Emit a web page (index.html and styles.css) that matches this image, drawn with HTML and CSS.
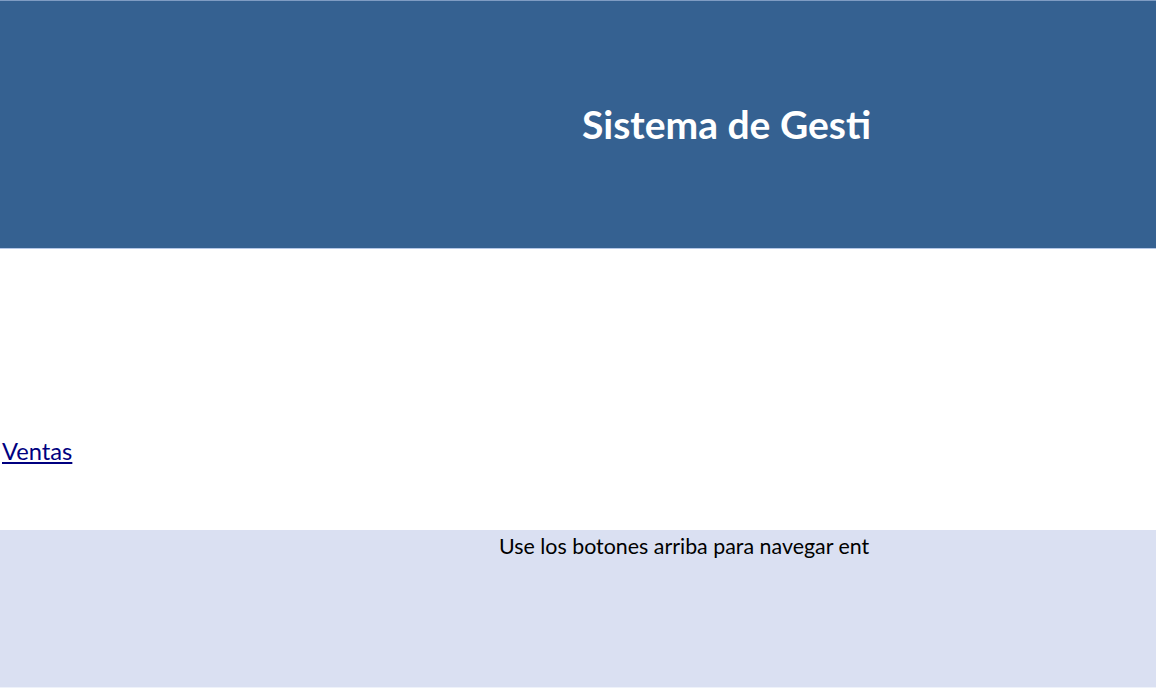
FILE: index.html
```html
<!DOCTYPE html>
<html lang="es">
<head>
    <meta charset="UTF-8">
    <meta name="viewport" content="width=device-width, initial-scale=1.0">
    <title>Sistema de Gestión de Ventas</title>
    <link rel="stylesheet" href="styles.css">
</head>
<body>
    <header class="banner">
        <div class="title-cell">
            <h1>Sistema de Gesti</h1>
        </div>
    </header>

    <div class="nav-row">
        <a href="#ventas">Ventas</a>
    </div>

    <div class="note-row">
        <div class="note-cell">Use los botones arriba para navegar ent</div>
    </div>
</body>
</html>
```

FILE: styles.css
```css
body {
    font-family: 'Lato', 'Noto Sans', sans-serif;
    margin: 0;
    padding: 0;
    background: #fff;
    color: #000;
}

/* Header band */
.banner {
    height: 247px;
    background: #356191;
    border-top: 1px solid #7f9cc3;
    border-bottom: 1px solid #b4c7e7;
    display: flex;
    align-items: center;
}

.title-cell {
    margin-left: 582px;
    white-space: nowrap;
}

.title-cell h1 {
    margin: 0;
    font-size: 39px;
    line-height: 1.2;
    font-weight: bold;
    color: #fff;
}

/* Link row */
.nav-row {
    height: 281px;
    display: flex;
    align-items: flex-end;
}

.nav-row a {
    display: block;
    color: #000080;
    font-size: 23.7px;
    line-height: 1.2;
    margin: 0 0 65px 2px;
}

/* Note band */
.note-row {
    height: 157px;
    background: #dae0f2;
    border-bottom: 1px solid #eef2fa;
}

.note-cell {
    margin-left: 499px;
    padding-top: 4px;
    white-space: nowrap;
    font-size: 21.4px;
    line-height: 1.2;
}
```
